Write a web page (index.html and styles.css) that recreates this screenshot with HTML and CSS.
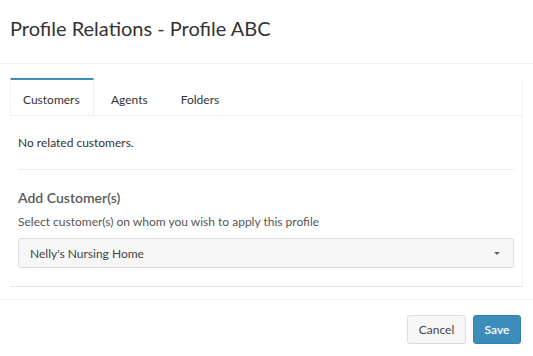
FILE: index.html
```html
<!DOCTYPE html>
<html lang="en">

<head>
    <meta charset="UTF-8">
    <meta name="viewport" content="width=device-width, initial-scale=1.0">
    <title>Profile Relations</title>
    <link rel="stylesheet" href="styles.css">
</head>

<body>
    <div class="modal">
        <div class="modal-header">
            <h1>Profile Relations - Profile ABC</h1>
        </div>

        <div class="modal-body">
            <div class="panel">
                <ul class="tabs">
                    <li class="tab active">Customers</li>
                    <li class="tab">Agents</li>
                    <li class="tab">Folders</li>
                </ul>
                <div class="tab-content">
                    <p class="empty">No related customers.</p>
                    <hr>
                    <h2>Add Customer(s)</h2>
                    <p class="hint">Select customer(s) on whom you wish to apply this profile</p>
                    <div class="select">
                        <span>Nelly's Nursing Home</span>
                        <span class="caret"></span>
                    </div>
                </div>
            </div>
        </div>

        <div class="modal-footer">
            <button class="btn">Cancel</button>
            <button class="btn btn-primary">Save</button>
        </div>
    </div>
</body>

</html>
```

FILE: styles.css
```css
/* Reset */
* {
    margin: 0;
    padding: 0;
    box-sizing: border-box;
}

body {
    font-family: 'Lato', sans-serif;
    background-color: #fff;
    color: #333;
}

/* Header */
.modal-header {
    height: 64px;
    padding: 16px 10px 0;
    border-bottom: 1px solid #eee;
}

.modal-header h1 {
    font-size: 20px;
    font-weight: 400;
    color: #333;
}

/* Body */
.modal-body {
    padding: 14px 10px 12px;
}

.panel {
    border-right: 1px solid #f2f2f2;
    border-bottom: 1px solid #e8e8e8;
}

.tabs {
    list-style: none;
    display: flex;
    border-bottom: 1px solid #eee;
}

.tab {
    font-size: 12px;
    padding: 12px 16px 0 18px;
    height: 37px;
    color: #333;
    border-top: 2px solid transparent;
}

.tab + .tab {
    padding-left: 17px;
}

.tab.active {
    width: 84px;
    border-top: 2px solid #3c8dbc;
    border-right: 1px solid #f0f0f0;
    border-left: 1px solid #f4f4f4;
    padding-left: 12px;
    padding-right: 0;
    margin-bottom: -1px;
    background: #fff;
}

.tab-content {
    padding: 19px 8px 18px;
}

.empty {
    font-size: 12px;
}

hr {
    border: none;
    border-top: 1px solid #eee;
    margin: 19px 0 19px;
}

.tab-content h2 {
    font-size: 14px;
    font-weight: 600;
    color: #5a5a5a;
    margin-bottom: 8px;
}

.hint {
    font-size: 12px;
    color: #555;
    margin-bottom: 9px;
}

.select {
    display: flex;
    justify-content: space-between;
    align-items: center;
    height: 30px;
    padding: 0 13px 0 11px;
    background-color: #f7f7f7;
    border: 1px solid #ddd;
    border-radius: 2px;
    font-size: 12px;
    color: #444;
}

.caret {
    width: 0;
    height: 0;
    border-left: 3px solid transparent;
    border-right: 3px solid transparent;
    border-top: 3px solid #666;
}

/* Footer */
.modal-footer {
    display: flex;
    justify-content: flex-end;
    gap: 7px;
    border-top: 1px solid #f2f2f2;
    padding: 15px 12px;
}

.btn {
    font-family: 'Lato', sans-serif;
    font-size: 12px;
    height: 29px;
    width: 59px;
    background-color: #f7f7f7;
    color: #444;
    border: 1px solid #ddd;
    border-radius: 3px;
}

.btn-primary {
    width: 48px;
    background-color: #3c8dbc;
    border-color: #367fa9;
    color: #fff;
    font-weight: 600;
}
```
